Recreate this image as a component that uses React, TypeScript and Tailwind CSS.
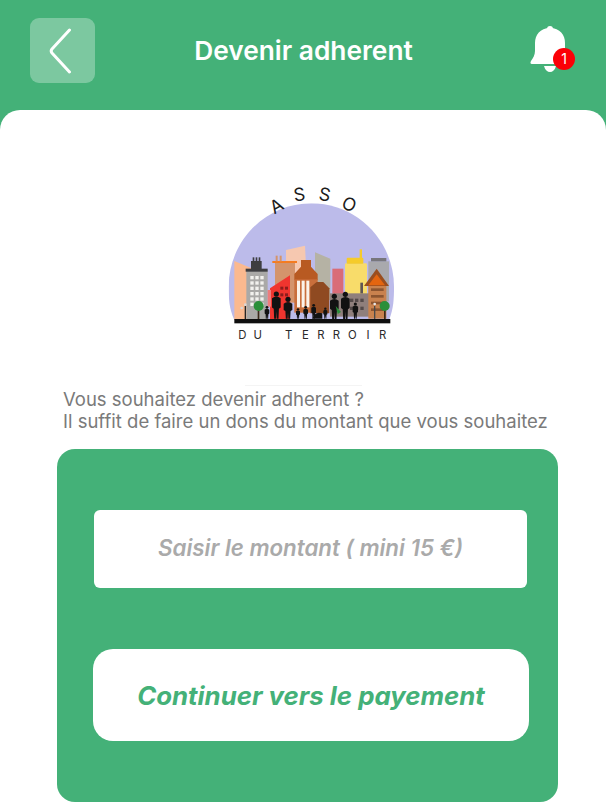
import React from "react";

const people = [
  [156, 382, 7, 34],
  [184, 342, 13, 74],
  [219, 358, 13, 58],
  [249, 388, 6, 28],
  [272, 382, 7, 34],
  [296, 376, 7, 40],
  [331, 386, 6, 30],
  [358, 349, 13, 68],
  [391, 343, 13, 74],
  [421, 372, 8, 44],
];

const Logo: React.FC = () => {
  return (
    <svg width="190" height="170" viewBox="0 0 570 510" className="ml-[215px] block self-start">
      <defs>
        <clipPath id="dome">
          <path d="M58 420 C42 385 41 355 41 320 C41 183 152 70 289 70 C426 70 537 183 537 320 C537 355 536 385 522 420 Z" />
        </clipPath>
      </defs>

      <g clipPath="url(#dome)">
        {/* Sky dome */}
        <rect x="30" y="60" width="520" height="370" fill="#bcbbea" />

        {/* Back buildings */}
        <path d="M58 243 L108 264 V420 H58 Z" fill="#fbb98f" />
        <path d="M213 210 L270 197 L275 300 H213 Z" fill="#f6c8b0" />
        <path d="M300 217 L346 236 V360 H300 Z" fill="#b5b2a4" />
        <rect x="352" y="266" width="33" height="90" fill="#d96c78" />
        <rect x="390" y="250" width="66" height="100" rx="4" fill="#f8dc6a" />
        <rect x="395" y="233" width="50" height="18" rx="3" fill="#f5cb2a" />
        <rect x="434" y="208" width="7" height="28" fill="#f5cb2a" />
        <rect x="460" y="244" width="62" height="120" fill="#a9a9ad" />
        <rect x="468" y="234" width="46" height="10" fill="#77767c" />

        {/* Grey tower */}
        <rect x="94" y="272" width="64" height="148" fill="#aaa9a7" />
        <rect x="92" y="266" width="66" height="9" fill="#3d3d40" />
        <rect x="108" y="243" width="32" height="24" fill="#3d3d40" />
        <rect x="113" y="232" width="5" height="12" fill="#3d3d40" />
        <rect x="122" y="232" width="5" height="12" fill="#3d3d40" />
        <rect x="131" y="232" width="5" height="12" fill="#3d3d40" />
        {[288, 304, 320, 336, 352, 368].map((y) =>
          [106, 121, 136].map((x) => (
            <rect key={`${x}-${y}`} x={x} y={y} width="10" height="10" fill="#f2f1ee" />
          ))
        )}

        {/* Tan and red */}
        <rect x="180" y="248" width="60" height="120" fill="#d4946c" />
        <rect x="172" y="243" width="74" height="6" fill="#f47c22" />
        <rect x="182" y="227" width="6" height="17" fill="#d4946c" />
        <rect x="194" y="227" width="6" height="17" fill="#d4946c" />
        <path d="M165 325 L225 286 V420 H165 Z" fill="#f0352f" />
        <rect x="158" y="330" width="10" height="50" fill="#ee7c7c" />
        {[320, 340].map((y) =>
          [196, 210].map((x) => (
            <rect key={`${x}-${y}`} x={x} y={y} width="9" height="9" fill="#8e1d1d" />
          ))
        )}

        {/* Columned building */}
        <path d="M238 300 V282 L258 260 V240 H288 V260 L308 282 V300 Z" fill="#b85a22" />
        <rect x="238" y="298" width="70" height="100" fill="#c96f3c" />
        <rect x="246" y="302" width="9" height="80" fill="#fbf3ea" />
        <rect x="260" y="302" width="9" height="80" fill="#fbf3ea" />
        <rect x="274" y="302" width="9" height="80" fill="#fbf3ea" />
        <path d="M286 340 V322 L305 306 H325 L343 325 V400 H286 Z" fill="#8f4a21" />

        {/* Right buildings */}
        <rect x="345" y="340" width="118" height="70" fill="#8f7f7c" />
        <rect x="436" y="308" width="8" height="32" fill="#5f5555" />
        {[356, 380].map((y) =>
          [405, 420, 436].map((x) => (
            <rect key={`${x}-${y}`} x={x} y={y} width="10" height="10" fill="#544a4a" />
          ))
        )}
        <rect x="460" y="316" width="54" height="100" fill="#c9824e" />
        <path d="M447 318 L485 266 L522 318 Z" fill="#9a4e1f" />
        <path d="M460 316 L485 283 L510 316 Z" fill="#e4650f" />
        {[325, 345, 365, 385].map((y) => (
          <rect key={y} x="468" y={y} width="38" height="8" fill="#8c5530" />
        ))}
      </g>

      {/* Trees and lamps */}
      <rect x="128" y="390" width="5" height="30" fill="#3b2a1a" />
      <circle cx="131" cy="378" r="15" fill="#2b8f3a" />
      <rect x="507" y="390" width="5" height="30" fill="#3b2a1a" />
      <circle cx="509" cy="378" r="15" fill="#2b8f3a" />
      <rect x="89" y="378" width="4" height="42" fill="#262626" />
      <circle cx="80" cy="384" r="4" fill="#d8d8d8" />
      <circle cx="91" cy="374" r="4" fill="#d8d8d8" />
      <rect x="477" y="378" width="4" height="42" fill="#4a4a4a" />
      <circle cx="479" cy="372" r="4" fill="#e8e8e8" />

      {/* People */}
      <g fill="#121212">
        {people.map(([cx, cy, r, h]) => (
          <g key={cx}>
            <circle cx={cx} cy={cy} r={r * 0.6} />
            <path
              d={`M${cx - r * 0.5} ${cy + h} L${cx - r * 0.6} ${cy + h * 0.6} L${cx - r} ${cy + h * 0.55} L${cx - r} ${cy + r} Q${cx} ${cy + r * 0.2} ${cx + r} ${cy + r} L${cx + r} ${cy + h * 0.55} L${cx + r * 0.6} ${cy + h * 0.6} L${cx + r * 0.5} ${cy + h} L${cx + 1} ${cy + h} L${cx} ${cy + h * 0.7} L${cx - 1} ${cy + h} Z`}
            />
          </g>
        ))}
        <path d="M292 416 Q300 392 322 400 L322 416 Z" />
      </g>
      <path d="M362 378 L378 396 L368 402 Z" fill="#2b8f3a" />

      {/* Ground */}
      <rect x="58" y="417" width="468" height="13" fill="#0f0f0f" />

      {/* ASSO */}
      <g fill="#1c1c1c" fontFamily="Inter, sans-serif" fontSize="54" textAnchor="middle">
        <text transform="translate(194 94) rotate(-30)">A</text>
        <text transform="translate(256 62) rotate(-8)">S</text>
        <text transform="translate(326 62) rotate(10)">S</text>
        <text transform="translate(394 90) rotate(26)">O</text>
      </g>

      {/* DU TERROIR */}
      <g fill="#2a2a2a" fontFamily="Inter, sans-serif" fontSize="34" textAnchor="middle">
        <text x="82" y="477">D</text>
        <text x="128" y="477">U</text>
        <text x="221" y="477">T</text>
        <text x="271" y="477">E</text>
        <text x="318" y="477">R</text>
        <text x="364" y="477">R</text>
        <text x="412" y="477">O</text>
        <text x="459" y="477">I</text>
        <text x="503" y="477">R</text>
      </g>
    </svg>
  );
};

const App: React.FC = () => {
  return (
    <div className="h-[808px] w-[606px] overflow-hidden bg-[#44b178] font-['Inter',sans-serif]">
      {/* Header */}
      <header className="flex h-[110px] items-start pl-[30px] pr-[31px] pt-[18px]">
        <button className="flex h-[65px] w-[65px] items-center justify-center rounded-[9px] bg-white/30 pr-[6px]">
          <svg width="24" height="46" viewBox="0 0 24 46" fill="none" stroke="white" strokeWidth="3" strokeLinecap="round" strokeLinejoin="round">
            <path d="M21.5 2 L4 21 Q2.4 23 4 25 L21.5 44" />
          </svg>
        </button>

        <h1 className="mt-[15px] flex-1 pr-[18px] text-center text-[26.3px] font-semibold leading-[35px] text-white">Devenir adherent</h1>

        <div className="relative mt-[7px] h-[47px] w-[45px]">
          <svg width="40" height="48" viewBox="0 0 40 48" fill="white" className="block">
            <circle cx="20" cy="4" r="3" />
            <path d="M20 3 C10 3 5 10 5 18 V26 C5 30 3 33 1 36 Q-0.5 39 2 39 H38 Q40.5 39 39 36 C37 33 35 30 35 26 V18 C35 10 30 3 20 3 Z" />
            <path d="M14 41 H26 C25 45 22.5 47 20 47 C17.5 47 15 45 14 41 Z" />
          </svg>
          <span className="absolute left-[23px] top-[23px] flex h-[22px] w-[22px] items-center justify-center rounded-full bg-[#fb0007] text-sm leading-none text-white">1</span>
        </div>
      </header>

      {/* White sheet */}
      <main className="flex h-[698px] flex-col items-center rounded-t-[20px] bg-white pt-[70px]">
        <Logo />

        <div className="mt-[35px] h-px w-[117px] bg-[#f4f4f4]" />

        <div className="mt-[2px] w-full pl-[63px]">
          <p className="text-[18.5px] leading-[22px] text-[#7a7a7a]">
            Vous souhaitez devenir adherent ?<br />
            Il suffit de faire un dons du montant que vous souhaitez
          </p>
        </div>

        {/* Donation form */}
        <section className="ml-[57px] mt-[17px] flex h-[353px] w-[501px] flex-col items-start self-start rounded-[18px] bg-[#44b178] pt-[61px]">
          <input
            className="ml-[37px] h-[78px] w-[433px] rounded-[6px] bg-white pb-[3px] text-center text-[22.3px] font-semibold italic text-[#aaaaaa] outline-none placeholder:text-[#aaaaaa]"
            placeholder="Saisir le montant ( mini 15 €)"
          />
          <button className="ml-[36px] mt-[61px] h-[92px] w-[436px] rounded-[20px] bg-white pt-[3px] text-[25.8px] font-bold italic text-[#44b178]">
            Continuer vers le payement
          </button>
        </section>
      </main>
    </div>
  );
};

export default App;
